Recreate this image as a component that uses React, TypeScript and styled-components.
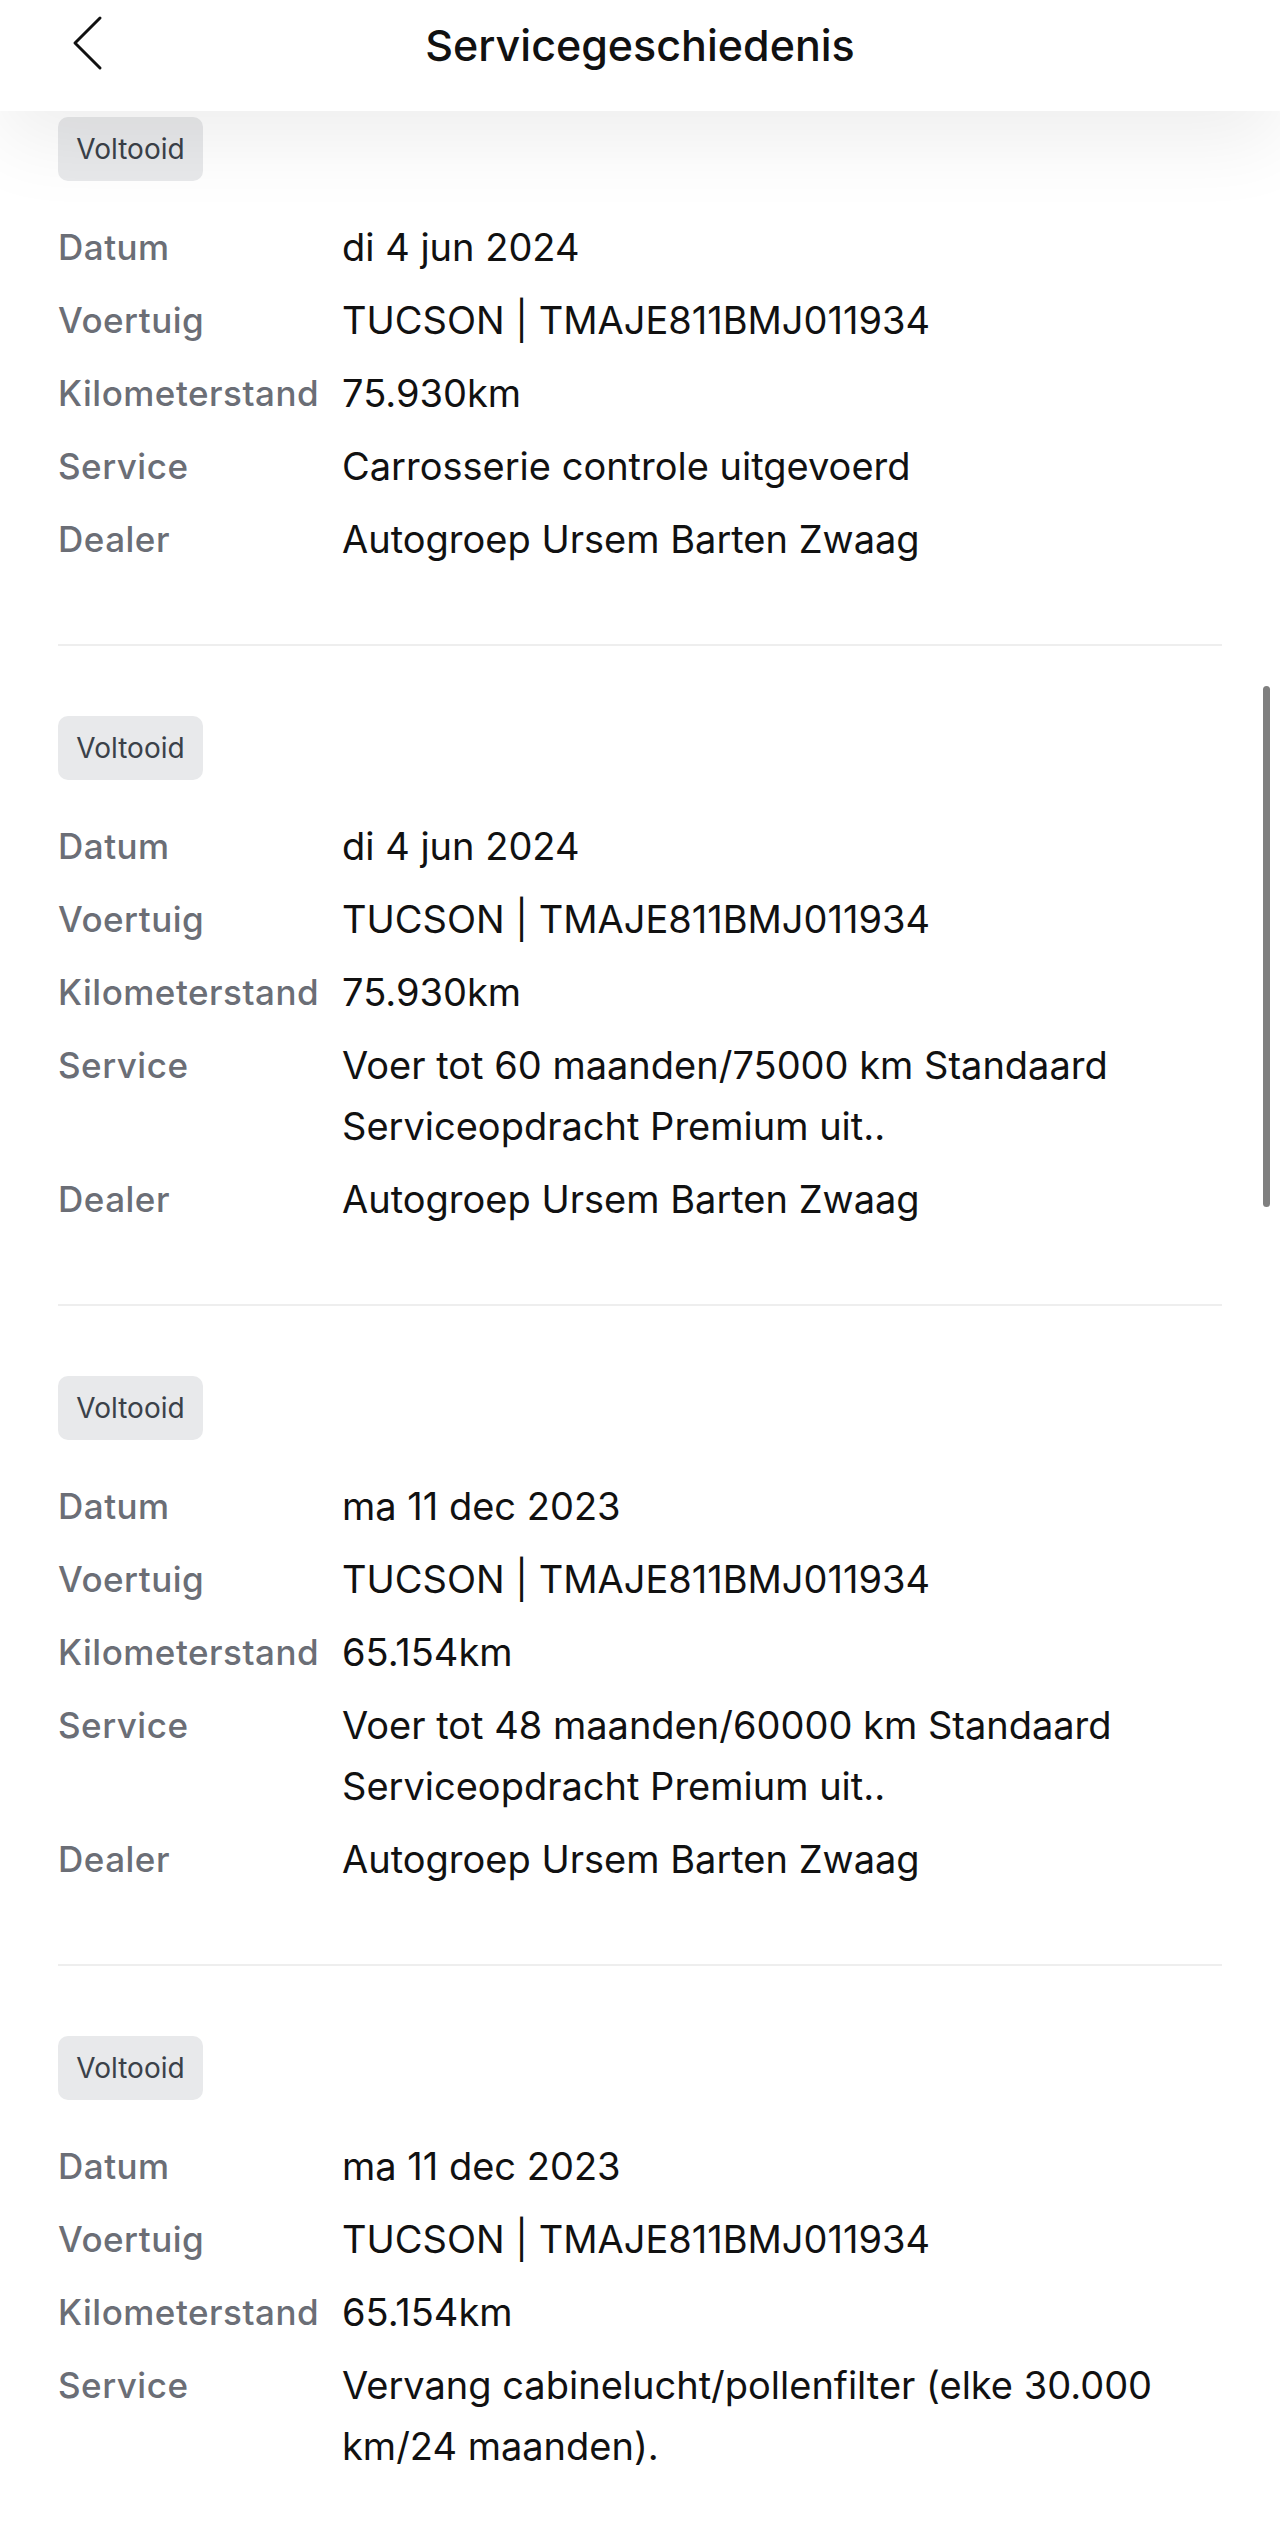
import styled, { createGlobalStyle } from "styled-components"

const GlobalStyle = createGlobalStyle`
  html, body {
    margin: 0;
    padding: 0;
    background: #fff;
  }
  body {
    font-family: Inter, "Noto Sans", sans-serif;
    color: #111;
    -webkit-font-smoothing: antialiased;
  }
`

type Entry = {
  date: string
  vehicle: string
  mileage: string
  service: string
  dealer?: string
}

const entries: Entry[] = [
  {
    date: "di 4 jun 2024",
    vehicle: "TUCSON | TMAJE811BMJ011934",
    mileage: "75.930km",
    service: "Carrosserie controle uitgevoerd",
    dealer: "Autogroep Ursem Barten Zwaag",
  },
  {
    date: "di 4 jun 2024",
    vehicle: "TUCSON | TMAJE811BMJ011934",
    mileage: "75.930km",
    service: "Voer tot 60 maanden/75000 km Standaard Serviceopdracht Premium uit..",
    dealer: "Autogroep Ursem Barten Zwaag",
  },
  {
    date: "ma 11 dec 2023",
    vehicle: "TUCSON | TMAJE811BMJ011934",
    mileage: "65.154km",
    service: "Voer tot 48 maanden/60000 km Standaard Serviceopdracht Premium uit..",
    dealer: "Autogroep Ursem Barten Zwaag",
  },
  {
    date: "ma 11 dec 2023",
    vehicle: "TUCSON | TMAJE811BMJ011934",
    mileage: "65.154km",
    service: "Vervang cabinelucht/pollenfilter (elke 30.000 km/24 maanden).",
  },
]

export default function App() {
  return (
    <Page>
      <GlobalStyle />
      <Header>
        <BackButton aria-label="Terug">
          <svg width="32" height="56" viewBox="0 0 32 56" fill="none">
            <polyline points="28,3 3,28 28,53" stroke="#111" strokeWidth="3" strokeLinecap="round" strokeLinejoin="round" />
          </svg>
        </BackButton>
        <Title>Servicegeschiedenis</Title>
        <span />
      </Header>

      <List>
        {entries.map((e, i) => (
          <Card key={i}>
            <Badge>Voltooid</Badge>
            <Details>
              <Label>Datum</Label>
              <Value>{e.date}</Value>
              <Label>Voertuig</Label>
              <Value>{e.vehicle}</Value>
              <Label>Kilometerstand</Label>
              <Value>{e.mileage}</Value>
              <Label>Service</Label>
              <Value>{e.service}</Value>
              {e.dealer && (
                <>
                  <Label>Dealer</Label>
                  <Value>{e.dealer}</Value>
                </>
              )}
            </Details>
          </Card>
        ))}
      </List>

      <ScrollThumb />
    </Page>
  )
}

const Page = styled.div`
  position: relative;
  width: 1280px;
  height: 2521px;
  overflow: hidden;
  background: #fff;
`

const Header = styled.header`
  position: relative;
  z-index: 2;
  height: 111px;
  box-sizing: border-box;
  display: grid;
  grid-template-columns: 1fr auto 1fr;
  align-items: start;
  background: #fff;
  box-shadow: 0 30px 80px rgba(0, 0, 0, 0.07);
`

const BackButton = styled.button`
  justify-self: start;
  margin: 15px 0 0 72px;
  padding: 0;
  border: 0;
  background: none;
  display: flex;
  cursor: pointer;
`

const Title = styled.h1`
  margin: 24px 0 0;
  font-size: 43px;
  line-height: 43px;
  font-weight: 500;
  color: #111;
`

const List = styled.main`
  padding: 0 58px;
`

const Card = styled.section`
  padding: 70px 0 74px;
  border-bottom: 2px solid #eeeeee;

  &:first-child {
    padding-top: 6px;
  }
`

const Badge = styled.div`
  display: inline-flex;
  align-items: center;
  justify-content: center;
  width: 145px;
  height: 64px;
  border-radius: 10px;
  background: #e8e9eb;
  color: #3b4149;
  font-size: 28px;
  font-weight: 400;
`

const Details = styled.dl`
  margin: 36px 0 0;
  display: grid;
  grid-template-columns: 284px 1fr;
  row-gap: 12px;
  align-items: start;
`

const Label = styled.dt`
  font-size: 35px;
  line-height: 61px;
  letter-spacing: 0.5px;
  font-weight: 500;
  color: #6b6e76;
`

const Value = styled.dd`
  margin: 0;
  font-size: 38px;
  line-height: 61px;
  font-weight: 400;
  color: #111;
`

const ScrollThumb = styled.div`
  position: absolute;
  top: 686px;
  left: 1263px;
  width: 7px;
  height: 521px;
  border-radius: 4px;
  background: #7f7f7f;
  z-index: 3;
`
